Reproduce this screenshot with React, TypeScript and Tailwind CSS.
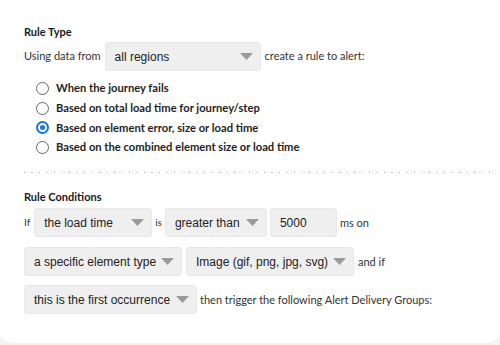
import React from "react";

const Arrow = () => (
  <svg width="13" height="7" viewBox="0 0 13 7" className="shrink-0">
    <path d="M0 0 H13 L6.5 7 Z" fill="#9a9a9a" />
  </svg>
);

const Select = ({ label, w }: { label: string; w: string }) => (
  <div
    className={`${w} h-[29px] shrink-0 flex items-center justify-between pl-[9px] pr-[7px] bg-[#efefef] border border-[#e8e8e8] rounded-[3px] text-[12px] text-[#222] font-['Liberation_Sans',Arial,sans-serif]`}
  >
    <span className="whitespace-nowrap">{label}</span>
    <Arrow />
  </div>
);

const Radio = ({ checked, label }: { checked?: boolean; label: string }) => (
  <div className="h-[19.6px] flex items-center gap-[7px]">
    {checked ? (
      <span className="w-[13px] h-[13px] rounded-full border-[2px] border-[#1272f0] bg-white flex items-center justify-center">
        <span className="w-[5px] h-[5px] rounded-full bg-[#1272f0]" />
      </span>
    ) : (
      <span className="w-[13px] h-[13px] rounded-full border border-[#666] bg-white" />
    )}
    <span className="font-bold text-[11.2px] text-[#1e1e1e] whitespace-nowrap">{label}</span>
  </div>
);

export default function App() {
  return (
    <div className="w-[500px] h-[345px] bg-[#f4f4f4] overflow-hidden font-['Lato',sans-serif]">
      <div className="ml-[-2px] mt-[-8px] w-[504px] h-[351px] rounded-[16px] bg-white shadow-[0_0_2px_rgba(0,0,0,0.03)] pl-[26px] pr-[12px] pt-[32px]">
        <div className="h-[16px] leading-[16px] text-[11px] font-bold text-[#1a1a1a]">Rule Type</div>
        <div className="mt-[2px] flex items-center gap-[4px] text-[11px] text-[#333]">
          <span>Using data from</span>
          <Select label="all regions" w="w-[156px]" />
          <span>create a rule to alert:</span>
        </div>
        <div className="mt-[8px] pl-[12px] flex flex-col">
          <Radio label="When the journey fails" />
          <Radio label="Based on total load time for journey/step" />
          <Radio checked label="Based on element error, size or load time" />
          <Radio label="Based on the combined element size or load time" />
        </div>
        <div className="mt-[15px] w-[470px] h-px bg-[linear-gradient(to_right,#a0a0a0_1px,transparent_1px)] bg-[length:7.5px_1px] bg-repeat-x" />
        <div className="mt-[16px] h-[16px] leading-[16px] text-[11px] font-bold text-[#1a1a1a]">Rule Conditions</div>
        <div className="mt-[3px] flex items-center gap-[3px] text-[11px] text-[#333]">
          <span className="text-[10px] pr-[1px]">If</span>
          <Select label="the load time" w="w-[118px]" />
          <span className="text-[10px]">is</span>
          <Select label="greater than" w="w-[102px]" />
          <div className="w-[67px] h-[29px] flex items-center pl-[9px] bg-[#efefef] border border-[#e8e8e8] rounded-[3px] text-[12px] text-[#222] font-['Liberation_Sans',Arial,sans-serif]">
            5000
          </div>
          <span>ms on</span>
        </div>
        <div className="mt-[10px] flex items-center gap-[4px] text-[11px] text-[#333]">
          <Select label="a specific element type" w="w-[158px]" />
          <Select label="Image (gif, png, jpg, svg)" w="w-[168px]" />
          <span>and if</span>
        </div>
        <div className="mt-[9px] flex items-center gap-[3px] text-[11px] text-[#333]">
          <Select label="this is the first occurrence" w="w-[173px]" />
          <span>then trigger the following Alert Delivery Groups:</span>
        </div>
      </div>
    </div>
  );
}
